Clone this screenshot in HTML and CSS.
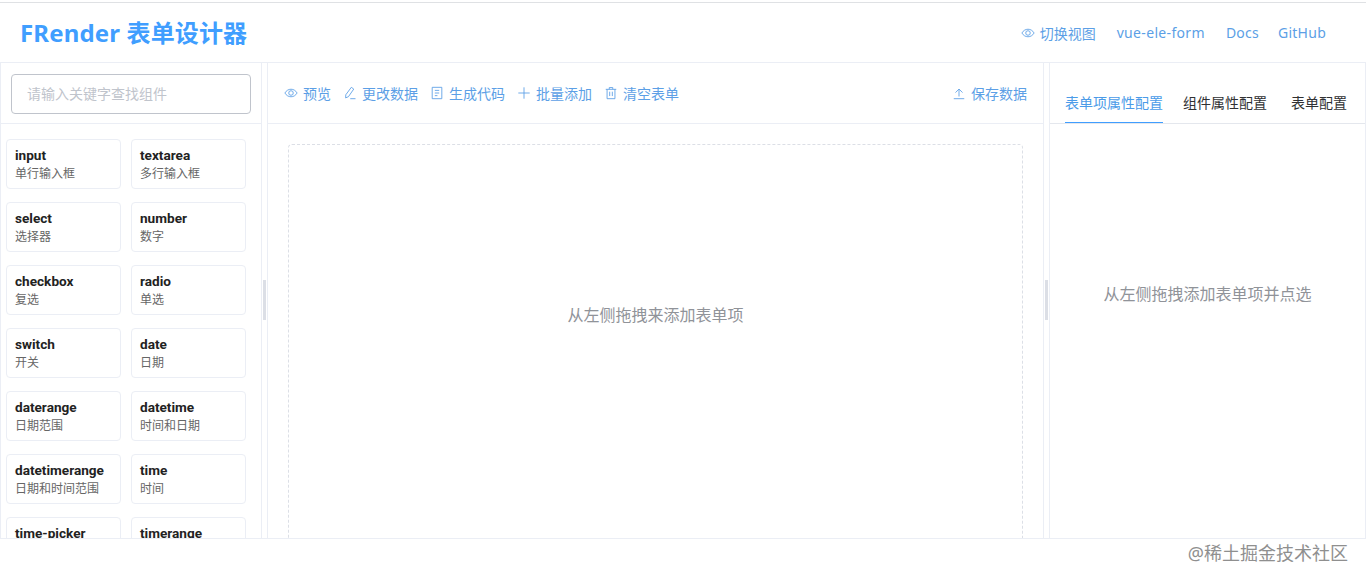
FILE: index.html
```html
<!DOCTYPE html>
<html lang="zh-CN">
<head>
<meta charset="utf-8">
<title>FRender 表单设计器</title>
<link rel="stylesheet" href="styles.css">
</head>
<body>
<div class="app">
  <header class="header">
    <h1 class="logo">FRender 表单设计器</h1>
    <nav class="nav">
      <a class="nav-link"><svg class="icon" viewBox="0 0 16 16"><path d="M1 8c1.800-2.900 4.200-4.300 7-4.300s5.200 1.400 7 4.300c-1.800 2.900-4.200 4.300-7 4.300S2.800 10.900 1 8z"/><circle cx="8" cy="8" r="2.600"/></svg>切换视图</a>
      <a class="nav-link nav-vue">vue-ele-form</a>
      <a class="nav-link nav-latin">Docs</a>
      <a class="nav-link nav-latin nav-github">GitHub</a>
    </nav>
  </header>
  <main class="main">
    <aside class="left">
      <div class="search"><input class="search-input" placeholder="请输入关键字查找组件"></div>
      <div class="cards">
        <div class="card"><b>input</b><span>单行输入框</span></div>
        <div class="card"><b>textarea</b><span>多行输入框</span></div>
        <div class="card"><b>select</b><span>选择器</span></div>
        <div class="card"><b>number</b><span>数字</span></div>
        <div class="card"><b>checkbox</b><span>复选</span></div>
        <div class="card"><b>radio</b><span>单选</span></div>
        <div class="card"><b>switch</b><span>开关</span></div>
        <div class="card"><b>date</b><span>日期</span></div>
        <div class="card"><b>daterange</b><span>日期范围</span></div>
        <div class="card"><b>datetime</b><span>时间和日期</span></div>
        <div class="card"><b>datetimerange</b><span>日期和时间范围</span></div>
        <div class="card"><b>time</b><span>时间</span></div>
        <div class="card"><b>time-picker</b><span>时间选择</span></div>
        <div class="card"><b>timerange</b><span>时间范围</span></div>
      </div>
    </aside>
    <div class="splitter"><i class="grip"></i></div>
    <section class="center">
      <div class="toolbar">
        <a class="tool"><svg class="icon" viewBox="0 0 16 16"><path d="M1 8c1.800-2.900 4.200-4.300 7-4.300s5.200 1.400 7 4.300c-1.800 2.900-4.200 4.300-7 4.300S2.800 10.900 1 8z"/><circle cx="8" cy="8" r="2.600"/></svg>预览</a>
        <a class="tool"><svg class="icon" viewBox="0 0 16 16"><path d="M9.500 1.500 12.300 3.500 6.200 12.200 3 13.600 3.200 10zM8.300 14.500h6"/></svg>更改数据</a>
        <a class="tool"><svg class="icon" viewBox="0 0 16 16"><path d="M2.500 1.500h11v13h-11zM5.500 5h5M5.500 8h5M5.500 11h3"/></svg>生成代码</a>
        <a class="tool"><svg class="icon" viewBox="0 0 16 16"><path d="M8 1.500v13M1.500 8h13"/></svg>批量添加</a>
        <a class="tool"><svg class="icon" viewBox="0 0 16 16"><path d="M2 3.800h12M6 3.800V1.800h4v2M3.500 3.800v10.700h9V3.800M6.500 6.500v5M9.500 6.500v5"/></svg>清空表单</a>
        <a class="tool tool-right"><svg class="icon" viewBox="0 0 16 16"><path d="M8 12V3.500M4 7.500 8 3.500l4 4M2 14.500h12"/></svg>保存数据</a>
      </div>
      <div class="canvas-wrap">
        <div class="canvas">从左侧拖拽来添加表单项</div>
      </div>
    </section>
    <div class="splitter"><i class="grip"></i></div>
    <aside class="right">
      <div class="tabs">
        <span class="tab tab-active">表单项属性配置</span>
        <span class="tab">组件属性配置</span>
        <span class="tab tab-last">表单配置</span>
      </div>
      <p class="empty">从左侧拖拽添加表单项并点选</p>
    </aside>
  </main>
</div>
<div class="watermark">@稀土掘金技术社区</div>
</body>
</html>
```
FILE: styles.css
```css
* { box-sizing: border-box; }
html, body { margin: 0; height: 582px; overflow: hidden; background: #fff; }
body {
  font-family: "Noto Sans", "Noto Sans CJK SC", sans-serif;
  font-size: 14px;
  color: #303133;
}
.app {
  margin-top: 2px;
  height: 537px;
  overflow: hidden;
  border-top: 1px solid #dfe1e4;
  border-bottom: 1px solid #ebeef5;
  display: flex;
  flex-direction: column;
}
.header {
  height: 59px;
  flex: none;
  display: flex;
  align-items: center;
  justify-content: space-between;
  padding: 0 40px 0 20px;
}
.logo {
  margin: 0;
  font-size: 24px;
  line-height: 32px;
  font-weight: 700;
  letter-spacing: 0.15px;
  color: #409eff;
}
.nav { display: flex; gap: 21px; font-size: 14px; }
.nav-link { display: flex; align-items: center; color: #5c9fe6; }
.nav-vue { letter-spacing: 0.33px; }
.nav-latin { letter-spacing: 0.25px; }
.nav-github { margin-left: -2px; }
.icon {
  width: 14px;
  height: 14px;
  margin-right: 5px;
  fill: none;
  stroke: #5c9fe6;
  stroke-width: 1;
}
.main {
  flex: 1;
  min-height: 0;
  display: flex;
  border-top: 1px solid #ebeef5;
}
.left {
  width: 262px;
  flex: none;
  border-left: 1px solid #ebeef5;
  border-right: 1px solid #ebeef5;
}
.search {
  height: 61px;
  padding: 11px 10px 0;
  border-bottom: 1px solid #ebeef5;
}
.search-input {
  display: block;
  width: 240px;
  height: 40px;
  padding: 0 15px 2px;
  border: 1px solid #c0c4cc;
  border-radius: 4px;
  outline: none;
  font: 14px "Noto Sans", "Noto Sans CJK SC", sans-serif;
}
.search-input::placeholder { color: #c0c4cc; }
.cards {
  display: grid;
  grid-template-columns: 115px 115px;
  column-gap: 10px;
  row-gap: 13px;
  padding: 15px 0 0 5px;
}
.card {
  height: 50px;
  padding: 6px 8px 0;
  border: 1px solid #ebeef5;
  border-radius: 4px;
  display: flex;
  flex-direction: column;
  line-height: 18px;
}
.card b { font-family: Roboto, "Noto Sans", sans-serif; font-size: 13.6px; line-height: 19px; font-weight: 700; color: #222; }
.card span { font-size: 12px; color: #666; }
.splitter {
  width: 5px;
  flex: none;
  position: relative;
}
.grip {
  position: absolute;
  left: 1px;
  top: 217px;
  width: 3px;
  height: 40px;
  background: #dcdfe6;
}
.center {
  width: 777px;
  flex: none;
  border-left: 1px solid #ebeef5;
  border-right: 1px solid #ebeef5;
}
.toolbar {
  height: 61px;
  display: flex;
  align-items: center;
  gap: 12px;
  padding: 0 16px;
  border-bottom: 1px solid #ebeef5;
  font-size: 14px;
}
.tool { display: flex; align-items: center; color: #5c9fe6; }
.tool-right { margin-left: auto; }
.canvas-wrap { padding: 20px 20px 0; }
.canvas {
  height: 500px;
  border: 1px dashed #dcdfe6;
  border-radius: 4px;
  padding-top: 159px;
  text-align: center;
  font-size: 16px;
  line-height: 22px;
  color: #909399;
}
.right {
  flex: 1;
  min-width: 0;
  border-left: 1px solid #ebeef5;
  border-right: 1px solid #ebeef5;
}
.tabs {
  height: 61px;
  padding: 0 18px 0 15px;
  display: flex;
  align-items: flex-end;
  gap: 20px;
  border-bottom: 1px solid #e4e7ed;
  font-size: 14px;
}
.tab { height: 40px; line-height: 40px; border-bottom: 1px solid transparent; }
.tab-active { color: #4a9be8; border-bottom-color: #409eff; }
.tab-last { margin-left: 4px; }
.empty {
  margin: 159px 0 0;
  text-align: center;
  font-size: 16px;
  line-height: 22px;
  color: #909399;
}
.watermark {
  position: absolute;
  right: 18px;
  top: 541px;
  font-size: 18px;
  line-height: 24px;
  color: #8f8f8f;
}
```
